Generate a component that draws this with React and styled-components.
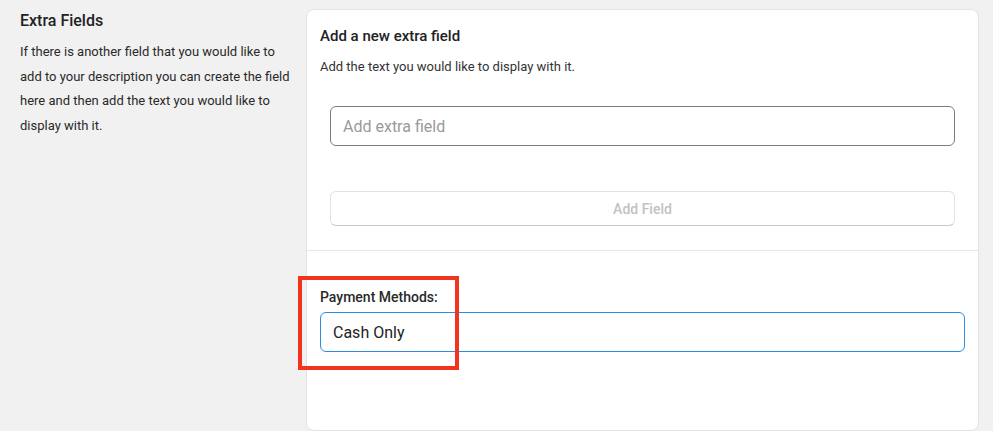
import React, { useState } from 'react';
import styled, { createGlobalStyle } from 'styled-components';

const GlobalStyle = createGlobalStyle`
  html, body {
    margin: 0;
    padding: 0;
    background: #f1f1f1;
    font-family: Roboto, "Liberation Sans", sans-serif;
    color: #222;
  }
  * {
    box-sizing: border-box;
  }
`;

const Page = styled.div`
  display: flex;
  align-items: flex-start;
  gap: 16px;
  padding: 9px 14px 0 20px;
  height: 431px;
  overflow: hidden;
`;

const Aside = styled.div`
  width: 270px;
  flex-shrink: 0;
  padding-top: 2px;
`;

const AsideTitle = styled.h2`
  margin: 0;
  font-size: 16px;
  font-weight: 500;
  line-height: 20px;
  color: #222;
`;

const AsideText = styled.p`
  margin: 9px 0 0;
  font-size: 13px;
  line-height: 24.7px;
  color: #2a2a2a;
`;

const Card = styled.div`
  flex: 1;
  min-height: 422px;
  background: #fff;
  border: 1px solid #e4e4e4;
  border-radius: 8px;
`;

const Section = styled.div`
  padding: ${p => p.$pad};
  border-top: ${p => (p.$divided ? '1px solid #e8e8e8' : 'none')};
`;

const CardTitle = styled.h3`
  margin: 0;
  font-size: 15px;
  font-weight: 500;
  line-height: 18px;
  color: #222;
`;

const CardText = styled.p`
  margin: 13px 0 0;
  font-size: 13px;
  line-height: 17px;
  color: #333;
`;

const FieldStack = styled.div`
  display: flex;
  flex-direction: column;
  gap: 45px;
  padding: 0 10px;
  margin-top: 31px;
`;

const TextInput = styled.input`
  display: block;
  width: 100%;
  height: 40px;
  padding: 0 12px;
  border: 1px solid ${p => (p.$active ? '#2b8de0' : '#7c7c7c')};
  border-radius: 6px;
  font-family: inherit;
  font-size: 16px;
  color: #222;
  background: #fff;
  outline: none;

  &::placeholder {
    color: #9a9a9a;
  }
`;

const GhostButton = styled.button`
  display: block;
  width: 100%;
  height: 35px;
  border: 1px solid #e2e2e2;
  border-bottom-color: #c9c9c9;
  border-radius: 6px;
  background: #fff;
  font-family: inherit;
  font-size: 14px;
  font-weight: 500;
  color: #c2c2c2;
  cursor: default;
`;

const FieldGroup = styled.div`
  position: relative;
`;

const Label = styled.label`
  display: block;
  margin-bottom: 6px;
  font-size: 14px;
  font-weight: 500;
  line-height: 18px;
  color: #2a2a2a;
`;

const Highlight = styled.div`
  position: absolute;
  left: -22px;
  top: -12px;
  width: 161px;
  height: 94px;
  border: 4px solid #f2341f;
  pointer-events: none;
`;

export default function App() {
  const [extra, setExtra] = useState('');
  const [payment, setPayment] = useState('Cash Only');

  return (
    <>
      <GlobalStyle />
      <Page>
        <Aside>
          <AsideTitle>Extra Fields</AsideTitle>
          <AsideText>
            If there is another field that you would like to add to your description you can create the field
            here and then add the text you would like to display with it.
          </AsideText>
        </Aside>
        <Card>
          <Section $pad="17px 13px 24px">
            <CardTitle>Add a new extra field</CardTitle>
            <CardText>Add the text you would like to display with it.</CardText>
            <FieldStack>
              <TextInput
                placeholder="Add extra field"
                value={extra}
                onChange={e => setExtra(e.target.value)}
              />
              <GhostButton type="button">Add Field</GhostButton>
            </FieldStack>
          </Section>
          <Section $divided $pad="37px 13px 0">
            <FieldGroup>
              <Label>Payment Methods:</Label>
              <TextInput
                $active
                value={payment}
                onChange={e => setPayment(e.target.value)}
              />
              <Highlight />
            </FieldGroup>
          </Section>
        </Card>
      </Page>
    </>
  );
}
